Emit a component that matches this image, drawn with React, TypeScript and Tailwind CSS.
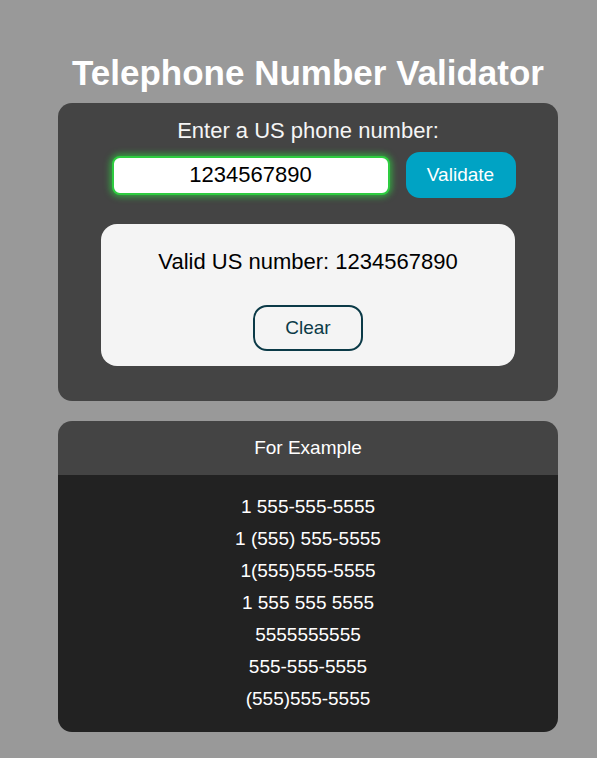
import { useState } from 'react'

const examples = [
  '1 555-555-5555',
  '1 (555) 555-5555',
  '1(555)555-5555',
  '1 555 555 5555',
  '5555555555',
  '555-555-5555',
  '(555)555-5555',
]

export default function App() {
  const [value, setValue] = useState('1234567890')

  return (
    <div className="min-h-screen bg-[#999999] font-['Liberation_Sans',Arial,sans-serif] pt-[53px] pb-10 pl-[19px]">
      <h1 className="text-center text-[35px] leading-[40px] font-bold text-white">
        Telephone Number Validator
      </h1>

      <div className="w-[500px] mx-auto mt-[10px] bg-[#444444] rounded-[14px] pt-[15px] pb-[35px]">
        <label className="block text-center text-[22px] leading-[26px] text-[#f5f5f5]">
          Enter a US phone number:
        </label>
        <div className="flex items-center justify-center gap-4 pl-[11px] mt-[8px]">
          <input
            value={value}
            onChange={(e) => setValue(e.target.value)}
            className="w-[278px] h-[39px] rounded-[8px] bg-white border-2 border-[#2ecc40] shadow-[0_0_6px_2px_rgba(46,204,64,0.7)] text-center text-[22px] text-black outline-none"
          />
          <button className="w-[110px] h-[46px] rounded-[14px] bg-[#00a3c4] text-white text-[19px]">
            Validate
          </button>
        </div>

        <div className="w-[414px] mx-auto mt-[26px] bg-[#f4f4f4] rounded-[16px] pt-[25px] pb-[15px] flex flex-col items-center">
          <p className="text-[22px] leading-[26px] text-black">Valid US number: {value}</p>
          <button className="mt-[30px] w-[110px] h-[46px] rounded-[14px] border-2 border-[#0b3a47] text-[#0b3a47] text-[19px]">
            Clear
          </button>
        </div>
      </div>

      <div className="w-[500px] mx-auto mt-[20px] rounded-[14px] overflow-hidden">
        <div className="h-[54px] bg-[#444444] flex items-center justify-center text-[19px] text-white">
          For Example
        </div>
        <ul className="bg-[#222222] pt-[16px] pb-[17px] text-center text-white text-[19px]">
          {examples.map((ex) => (
            <li key={ex} className="leading-[32px]">
              {ex}
            </li>
          ))}
        </ul>
      </div>
    </div>
  )
}
